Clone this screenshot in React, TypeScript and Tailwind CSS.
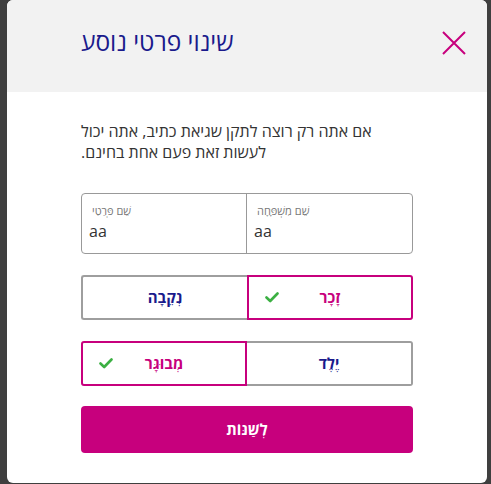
import React from "react";

const PINK = "#c7007d";

function Check() {
  return (
    <svg width="14" height="11" viewBox="0 0 14 11" fill="none">
      <path d="M1.5 5.5 L5.2 9 L12.5 1.5" stroke="#3cb043" strokeWidth="2.6" strokeLinecap="round" strokeLinejoin="round" />
    </svg>
  );
}

function Choice({ label, selected, side }: { label: string; selected: boolean; side: "l" | "r" }) {
  const base = "flex items-center h-full border-2 bg-white";
  const cls = selected
    ? `border-[#c7007d] ${side === "l" ? "rounded-l-[3px]" : "rounded-r-[3px]"}`
    : `border-[#9e9e9e] ${side === "l" ? "rounded-l-[3px] border-r-0" : "rounded-r-[3px] border-l-0"}`;
  return (
    <div className={`${base} ${cls}`}>
      <div className="w-[30px] pl-[16px] flex items-center">{selected ? <Check /> : null}</div>
      <div
        dir="rtl"
        className={`flex-1 text-center text-[15px] font-bold ${selected ? "text-[#c7007d]" : "text-[#1a1a8c]"}`}
      >
        {label}
      </div>
      <div className="w-[30px]" />
    </div>
  );
}

export default function App() {
  return (
    <div
      className="w-[491px] h-[484px] bg-[#3f3f3f] pl-[7px] overflow-hidden"
      style={{ fontFamily: '"Open Sans", "DejaVu Sans", sans-serif' }}
    >
      <div className="w-[480px] h-[483px] bg-white rounded-[6px] overflow-hidden flex flex-col">
        <div className="h-[92px] bg-[#f2f2f2] flex items-center justify-between pl-[74px] pr-[21px] shrink-0">
          <div dir="rtl" className="text-[24.5px] text-[#1a1a8c] leading-none pb-[7px]">
            שינוי פרטי נוסע
          </div>
          <svg width="24" height="24" viewBox="0 0 24 24" className="mb-[6px]">
            <path d="M1 1 L23 23 M23 1 L1 23" stroke={PINK} strokeWidth="2" />
          </svg>
        </div>
        <div className="px-[74px] flex flex-col">
          <p dir="rtl" className="text-left text-[16px] leading-[21px] text-[#333] mt-[29px]">
            אם אתה רק רוצה לתקן שגיאת כתיב, אתה יכול
            <br />
            לעשות זאת פעם אחת בחינם.
          </p>
          <div className="mt-[30px] h-[61px] border border-[#999] rounded-[4px] grid grid-cols-2">
            <div className="border-r border-[#999] pl-[7px] pt-[9px]">
              <div className="text-[11px] leading-[15px] text-[#777] pl-[3px]">שֵׁם פְּרַטִי</div>
              <div className="text-[16px] leading-[22px] text-[#333] mt-[2px]">aa</div>
            </div>
            <div className="pl-[7px] pt-[9px]">
              <div className="text-[11px] leading-[15px] text-[#777] pl-[3px]">שֵׁם מִשְׁפָּחָה</div>
              <div className="text-[16px] leading-[22px] text-[#333] mt-[2px]">aa</div>
            </div>
          </div>
          <div className="mt-[21px] h-[45px] grid grid-cols-2">
            <Choice label="נְקֵבָה" selected={false} side="l" />
            <Choice label="זָכָר" selected={true} side="r" />
          </div>
          <div className="mt-[21px] h-[45px] grid grid-cols-2">
            <Choice label="מְבוּגָּר" selected={true} side="l" />
            <Choice label="יֶלֶד" selected={false} side="r" />
          </div>
          <button
            dir="rtl"
            className="mt-[20px] h-[47px] w-full rounded-[4px] bg-[#c7007d] text-white text-[15px] font-bold"
          >
            לְשַׁנּוֹת
          </button>
        </div>
      </div>
    </div>
  );
}
